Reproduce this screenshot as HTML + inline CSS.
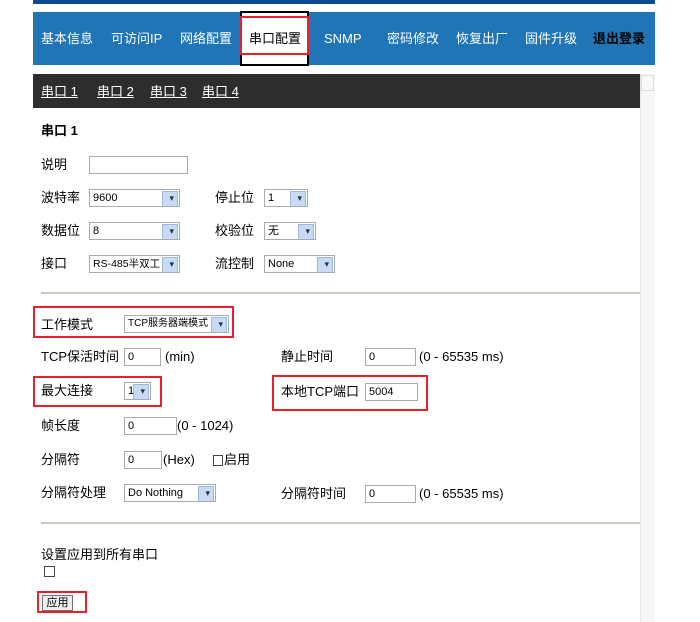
<!DOCTYPE html>
<html><head><meta charset="utf-8"><style>
*{margin:0;padding:0;box-sizing:border-box}
body{width:700px;height:622px;background:#fff;position:relative;overflow:hidden;font-family:"Liberation Sans","Noto Sans CJK SC",sans-serif;font-size:13px;color:#000}
.a{position:absolute;white-space:nowrap}
.t{position:absolute;white-space:nowrap;line-height:16px}
.in{position:absolute;border:1px solid #a5acb5;background:#fff;font-size:11px;line-height:16px;padding-left:3px;height:18px;overflow:hidden}
.sel{position:absolute;border:1px solid #a5acb5;background:#fff;font-size:11px;line-height:16px;padding-left:3px;height:18px;overflow:hidden}
.sel:after{content:"";position:absolute;right:1px;top:1px;width:14px;height:14px;background:#c9daf5;border:1px solid #9fb8e0}
.sel i{position:absolute;right:5px;top:0px;font-style:normal;font-size:9px;color:#234;z-index:2}
.red{position:absolute;border:2px solid #e8202a}
.nav{color:#fff;font-size:13px}
.lk{color:#fff;text-decoration:underline;font-size:13px}
</style></head><body>
<div class="a" style="left:33px;top:0;width:622px;height:4px;background:#0d4a94"></div>
<div class="a" style="left:33px;top:12px;width:622px;height:53px;background:#1f75b5"></div>
<div class="a" style="left:240px;top:11px;width:69px;height:55px;background:#fff;border:2px solid #000"></div>
<div class="red" style="left:240px;top:16px;width:69px;height:39px"></div>
<div class="t nav" style="left:41px;top:31px">基本信息</div>
<div class="t nav" style="left:111px;top:31px">可访问IP</div>
<div class="t nav" style="left:180px;top:31px">网络配置</div>
<div class="t" style="left:249px;top:31px">串口配置</div>
<div class="t nav" style="left:324px;top:31px">SNMP</div>
<div class="t nav" style="left:387px;top:31px">密码修改</div>
<div class="t nav" style="left:456px;top:31px">恢复出厂</div>
<div class="t nav" style="left:525px;top:31px">固件升级</div>
<div class="t" style="left:593px;top:31px;font-weight:bold">退出登录</div>
<div class="a" style="left:33px;top:74px;width:607px;height:34px;background:#2d2d2d"></div>
<div class="t lk" style="left:41px;top:84px">串口 1</div>
<div class="t lk" style="left:97px;top:84px">串口 2</div>
<div class="t lk" style="left:150px;top:84px">串口 3</div>
<div class="t lk" style="left:202px;top:84px">串口 4</div>
<div class="a" style="left:640px;top:74px;width:15px;height:548px;background:#f7f7f7;border-left:1px solid #e4e4e4"></div>
<div class="a" style="left:641px;top:75px;width:13px;height:16px;background:#f8f8f8;border:1px solid #ddd"></div>

<div class="t" style="left:41px;top:123px;font-weight:bold">串口 1</div>
<div class="t" style="left:41px;top:157px">说明</div><div class="in" style="left:89px;top:156px;width:99px"></div>
<div class="t" style="left:41px;top:190px">波特率</div><div class="sel" style="left:89px;top:189px;width:91px">9600<i>▾</i></div>
<div class="t" style="left:215px;top:190px">停止位</div><div class="sel" style="left:264px;top:189px;width:44px">1<i>▾</i></div>
<div class="t" style="left:41px;top:223px">数据位</div><div class="sel" style="left:89px;top:222px;width:91px">8<i>▾</i></div>
<div class="t" style="left:215px;top:223px">校验位</div><div class="sel" style="left:264px;top:222px;width:52px">无<i>▾</i></div>
<div class="t" style="left:41px;top:256px">接口</div><div class="sel" style="left:89px;top:255px;width:91px;font-size:10.5px">RS-485半双工<i>▾</i></div>
<div class="t" style="left:215px;top:256px">流控制</div><div class="sel" style="left:264px;top:255px;width:71px">None<i>▾</i></div>
<div class="a" style="left:41px;top:292px;width:599px;height:2px;background:#cdc9be"></div>

<div class="red" style="left:33px;top:306px;width:201px;height:32px"></div>
<div class="t" style="left:41px;top:317px">工作模式</div><div class="sel" style="left:124px;top:315px;width:105px;font-size:10px">TCP服务器端模式<i>▾</i></div>
<div class="t" style="left:41px;top:349px">TCP保活时间</div><div class="in" style="left:124px;top:348px;width:37px">0</div><div class="t" style="left:165px;top:349px">(min)</div>
<div class="t" style="left:281px;top:349px">静止时间</div><div class="in" style="left:365px;top:348px;width:51px">0</div><div class="t" style="left:419px;top:349px">(0 - 65535 ms)</div>
<div class="red" style="left:33px;top:376px;width:129px;height:31px"></div>
<div class="t" style="left:41px;top:383px">最大连接</div><div class="sel" style="left:124px;top:382px;width:27px">1<i>▾</i></div>
<div class="red" style="left:272px;top:375px;width:156px;height:36px"></div>
<div class="t" style="left:281px;top:384px">本地TCP端口</div><div class="in" style="left:365px;top:383px;width:53px">5004</div>
<div class="t" style="left:41px;top:418px">帧长度</div><div class="in" style="left:124px;top:417px;width:53px">0</div><div class="t" style="left:177px;top:418px">(0 - 1024)</div>
<div class="t" style="left:41px;top:452px">分隔符</div><div class="in" style="left:124px;top:451px;width:38px">0</div><div class="t" style="left:163px;top:452px">(Hex)</div>
<div class="a" style="left:213px;top:455px;width:10px;height:11px;border:1px solid #444"></div><div class="t" style="left:224px;top:452px">启用</div>
<div class="t" style="left:41px;top:485px">分隔符处理</div><div class="sel" style="left:124px;top:484px;width:92px">Do Nothing<i>▾</i></div>
<div class="t" style="left:281px;top:486px">分隔符时间</div><div class="in" style="left:365px;top:485px;width:51px">0</div><div class="t" style="left:419px;top:486px">(0 - 65535 ms)</div>
<div class="a" style="left:41px;top:522px;width:599px;height:2px;background:#cdc9be"></div>
<div class="t" style="left:41px;top:547px">设置应用到所有串口</div>
<div class="a" style="left:44px;top:566px;width:11px;height:11px;border:1px solid #444"></div>
<div class="red" style="left:37px;top:591px;width:50px;height:22px"></div>
<div class="a" style="left:42px;top:595px;width:31px;height:16px;border:1px solid #707070;background:#eee;font-size:11px;line-height:14px;text-align:center">应用</div>
</body></html>
